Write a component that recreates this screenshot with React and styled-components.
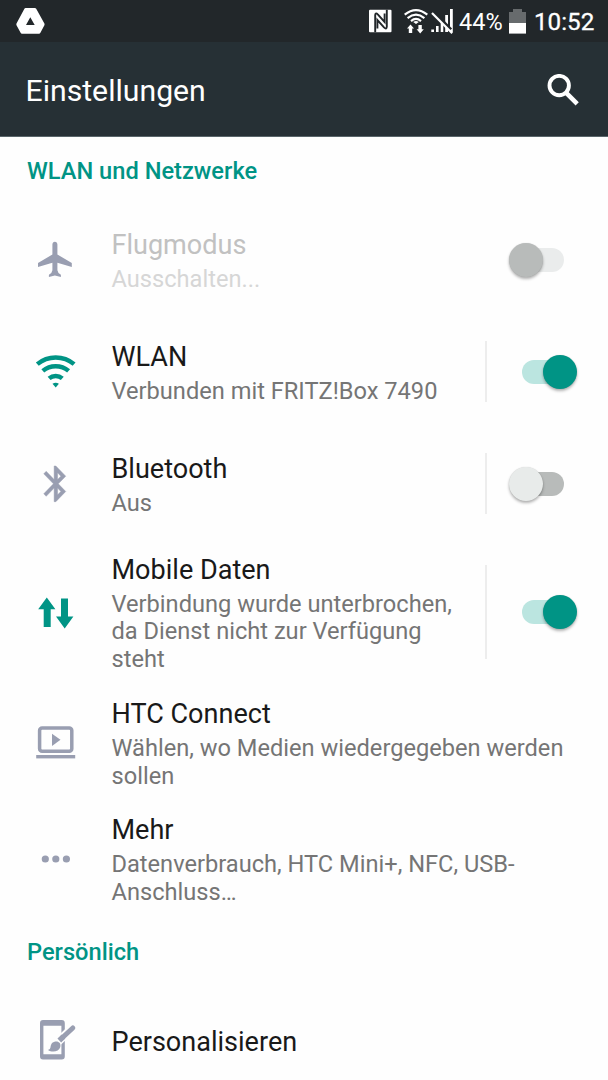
import React, { useState } from 'react';
import styled, { createGlobalStyle, ThemeProvider } from 'styled-components';

const theme = {
  accent: '#009485',
  accentLight: '#bbe5e0',
  icon: '#999eb1',
  title: '#191919',
  summary: '#757575',
};

const GlobalStyle = createGlobalStyle`
  * {
    box-sizing: border-box;
  }

  body {
    margin: 0;
    background: #fefefe;
    font-family: Roboto, 'Noto Sans', sans-serif;
    overflow: hidden;
  }
`;

const Screen = styled.div`
  width: 608px;
  height: 1080px;
  overflow: hidden;
  background: #fefefe;
`;

const StatusBar = styled.div`
  height: 42px;
  display: flex;
  align-items: center;
  padding: 0 14px 0 16px;
  background: #22272a;
  color: #fff;
`;

const StatusIcons = styled.div`
  display: flex;
  align-items: center;
  margin-left: auto;
`;

const StatusIcon = styled.svg`
  display: block;
  flex: none;
  margin-right: ${props => props.$gap || 0}px;
`;

const Battery = styled.span`
  width: 50px;
  font-size: 23.5px;
  line-height: 42px;
  padding-top: 2px;
`;

const Clock = styled.span`
  width: 60px;
  font-size: 24.2px;
  line-height: 42px;
  padding-top: 2px;
  white-space: nowrap;
  -webkit-text-stroke: 0.3px #fff;
`;

const AppBar = styled.header`
  height: 95px;
  display: flex;
  align-items: center;
  justify-content: space-between;
  margin-bottom: -1px;
  padding: 1px 28px 0 25.5px;
  background: #263035;
  border-bottom: 1px solid #59656a;
  color: #fff;
`;

const AppTitle = styled.h1`
  margin: 0;
  padding-top: 2px;
  font-size: 30.2px;
  font-weight: 400;
`;

const SearchButton = styled.button`
  padding: 0;
  border: 0;
  background: none;
  color: inherit;

  svg {
    display: block;
  }
`;

const SectionTitle = styled.h2`
  height: 68px;
  margin: 0;
  padding: 0 27px;
  font-size: 23.65px;
  font-weight: 500;
  line-height: 70px;
  color: ${props => props.theme.accent};
`;

const Row = styled.div`
  height: ${props => props.$height || 112}px;
  display: flex;
  align-items: center;
  padding: 0 24px 0 32px;
`;

const RowIcon = styled.svg`
  width: 48px;
  height: 48px;
  flex: none;
  margin-right: 31.5px;
  color: ${props => (props.$active ? props.theme.accent : props.theme.icon)};
`;

const RowText = styled.div`
  flex: 1;
  padding-top: ${props => (props.$single ? 2 : 0)}px;
  padding-right: ${props => (props.$toggle ? 16 : 0)}px;
  padding-bottom: ${props => (props.$single ? 0 : 2)}px;
`;

const RowTitle = styled.div`
  font-size: 27.05px;
  line-height: 41px;
  color: ${props => (props.$disabled ? '#c1c1c1' : props.theme.title)};
`;

const RowSummary = styled.div`
  font-size: 23.64px;
  line-height: 27.2px;
  color: ${props => (props.$disabled ? '#d6d6d6' : props.theme.summary)};
`;

const SwitchArea = styled.div`
  width: 99px;
  align-self: stretch;
  display: flex;
  align-items: center;
  margin: 25px 0 26px;
  padding-left: 35px;
  border-left: 2px solid ${props => (props.$divider ? '#ededed' : 'transparent')};
`;

const Track = styled.button`
  width: 42px;
  height: 24px;
  display: flex;
  align-items: center;
  justify-content: ${props => (props.$on ? 'flex-end' : 'flex-start')};
  padding: 0;
  border: 0;
  border-radius: 12px;
  background: ${props => {
    if (props.disabled) return '#eaecec';
    return props.$on ? props.theme.accentLight : '#b8bbba';
  }};
`;

const Knob = styled.span`
  width: 34px;
  height: 34px;
  flex: none;
  border-radius: 50%;
  margin: ${props => (props.$on ? '0 -13px 0 0' : '0 0 0 -13px')};
  background: ${props => {
    if (props.$disabled) return '#b8bbba';
    return props.$on ? props.theme.accent : '#e8ebea';
  }};
  box-shadow: 0 2px 3px rgba(0, 0, 0, 0.3), 0 0 1px rgba(0, 0, 0, 0.15);
`;

const AirplaneIcon = (
  <path
    fill="currentColor"
    d="M22.9 5.8c1.5 0 2.5 1.2 2.5 2.7V18.6L39.8 27V31L25.4 26.8V34.2Q25.5 36.6 28.9 38.8V41L22.9 39.6L16.9 41V38.8Q20.3 36.6 20.4 34.2V26.8L6 31V27L20.4 18.6V8.5c0-1.5 1-2.7 2.5-2.7z"
  />
);

const WifiIcon = (
  <g fill="none" stroke="currentColor" strokeWidth="4.5">
    <path d="M5.3 16.1A28.6 28.6 0 0 1 42.1 16.1" />
    <path d="M10.8 22.9A20 20 0 0 1 36.6 22.9" />
    <path d="M17.1 30.4A10.2 10.2 0 0 1 30.3 30.4" />
    <path d="M20.5 35.8Q23.7 33.6 26.9 35.8L23.7 39.4z" fill="currentColor" stroke="none" />
  </g>
);

const BluetoothIcon = (
  <path
    fill="currentColor"
    stroke="currentColor"
    strokeWidth=".25"
    transform="translate(3.1 2.4) scale(1.73 1.785)"
    d="M17.71 7.71L12 2h-1v7.59L6.41 5 5 6.41 10.59 12 5 17.59 6.41 19 11 14.41V22h1l5.71-5.71-4.3-4.29 4.3-4.29zM13 5.83l1.88 1.88L13 9.59V5.83zm1.88 10.46L13 18.17v-3.76l1.88 1.88z"
  />
);

const DataIcon = (
  <g fill="currentColor">
    <path d="M14.8 8.6L23.4 20.3H18.7V38.1H11.7V20.3H6.2z" />
    <path d="M29 9.6H36V27.6H41.4L32.7 39.6L24 27.6H29z" />
  </g>
);

const ConnectIcon = (
  <g fill="currentColor">
    <rect x="7.6" y="8.9" width="32.2" height="23.4" rx="2.5" fill="none" stroke="currentColor" strokeWidth="3.5" />
    <path d="M20 14.7L28.5 20.8L20 26.9z" />
    <rect x="4.2" y="36" width="39" height="3.4" />
  </g>
);

const MoreIcon = (
  <g fill="currentColor">
    <circle cx="13.3" cy="24" r="3.6" />
    <circle cx="23.8" cy="24" r="3.6" />
    <circle cx="34.4" cy="24" r="3.6" />
  </g>
);

const PersonalizeIcon = (
  <g fill="currentColor">
    <path
      fillRule="evenodd"
      d="M11 3H29.7Q32.8 3 32.8 6.2V39.2Q32.8 42.4 29.7 42.4H11Q8 42.4 8 39.2V6.2Q8 3 11 3zM11.4 8.7V37.3H29.4V8.7z"
    />
    <path d="M41.2 10.4L24 26.5" stroke="#fefefe" strokeWidth="8.5" />
    <path d="M40.8 11L30 21" stroke="currentColor" strokeWidth="5" strokeLinecap="round" />
    <path d="M31.5 19.6L27.3 23.5" stroke="currentColor" strokeWidth="5.4" />
    <path d="M22.5 24.8C26.6 23.8 29.2 26.4 28.3 29.9C27 34.6 20.2 35.8 16 32.9C18.9 32.2 18.2 30.4 19 28C19.6 26.2 20.8 25.2 22.5 24.8z" />
  </g>
);

const networkItems = [
  { id: 'airplane', title: 'Flugmodus', summary: 'Ausschalten...', icon: AirplaneIcon, toggle: true, disabled: true },
  { id: 'wifi', title: 'WLAN', summary: 'Verbunden mit FRITZ!Box 7490', icon: WifiIcon, toggle: true },
  { id: 'bluetooth', title: 'Bluetooth', summary: 'Aus', icon: BluetoothIcon, toggle: true },
  {
    id: 'data',
    title: 'Mobile Daten',
    summary: 'Verbindung wurde unterbrochen, da Dienst nicht zur Verfügung steht',
    icon: DataIcon,
    toggle: true,
    height: 145,
  },
  {
    id: 'connect',
    title: 'HTC Connect',
    summary: 'Wählen, wo Medien wiedergegeben werden sollen',
    icon: ConnectIcon,
    height: 116,
  },
  {
    id: 'more',
    title: 'Mehr',
    summary: 'Datenverbrauch, HTC Mini+, NFC, USB-Anschluss…',
    icon: MoreIcon,
    height: 116,
  },
];

const personalItems = [{ id: 'personalize', title: 'Personalisieren', icon: PersonalizeIcon }];

const SettingsRow = ({ item, on, onToggle }) => (
  <Row $height={item.height}>
    <RowIcon viewBox="0 0 48 48" $active={on}>
      {item.icon}
    </RowIcon>
    <RowText $single={!item.summary} $toggle={item.toggle}>
      <RowTitle $disabled={item.disabled}>{item.title}</RowTitle>
      {item.summary && <RowSummary $disabled={item.disabled}>{item.summary}</RowSummary>}
    </RowText>
    {item.toggle && (
      <SwitchArea $divider={!item.disabled}>
        <Track
          role="switch"
          aria-checked={on}
          aria-label={item.title}
          disabled={item.disabled}
          $on={on}
          onClick={() => onToggle(item.id)}
        >
          <Knob $on={on} $disabled={item.disabled} />
        </Track>
      </SwitchArea>
    )}
  </Row>
);

const App = () => {
  const [enabled, setEnabled] = useState({ wifi: true, data: true });

  const toggle = (id) => {
    setEnabled({ ...enabled, [id]: !enabled[id] });
  };

  return (
    <ThemeProvider theme={theme}>
      <GlobalStyle />
      <Screen>
        <StatusBar>
          <StatusIcon width="29" height="26" viewBox="0 0 29 26">
            <path
              fill="#fff"
              fillRule="evenodd"
              d="M9.6 0H18.8Q19.7 0 20.2.8L28.4 15.5Q28.8 16.4 28.4 17.2L24.4 24.8Q23.9 25.7 23 25.7H6Q5.1 25.7 4.6 24.8L.5 17.2Q.1 16.4.5 15.5L8.4.8Q8.8 0 9.6 0zM14.3 9.2L10 17H18.7z"
            />
          </StatusIcon>
          <StatusIcons>
            <StatusIcon width="23" height="24" viewBox="0 0 23 24" $gap={12}>
              <rect y=".8" width="22.5" height="22.5" rx="1" fill="#fff" />
              <g fill="none" stroke="#22272a" strokeWidth="1.9">
                <path d="M6.2 23.3V6Q6.4 3 9 5.6L15.6 13V4.6" />
                <path d="M17.8 .8V17.8Q17.6 21 15 18.4L8.4 11V19.4" />
              </g>
            </StatusIcon>
            <StatusIcon width="24" height="25" viewBox="0 0 24 25" $gap={3}>
              <g fill="none" stroke="#fff" strokeWidth="2.1">
                <path d="M.7 5.6Q12 -3.4 23.3 5.6" />
                <path d="M3.6 9.1Q12 2.2 20.4 9.1" />
                <path d="M7 12.1Q12 7.8 17 12.1" />
              </g>
              <path d="M9.2 13Q12 11.1 14.8 13L12 15z" fill="#fff" />
              <path d="M6.5 15.5L10 19.6H8.2V24H4.8V19.6H3z" fill="#fff" />
              <path d="M14.4 16H17.8V20.2H19.8L16.2 24.5L12.6 20.2H14.4z" fill="#fff" />
            </StatusIcon>
            <StatusIcon width="23" height="26" viewBox="0 0 23 26" $gap={5}>
              <path
                fill="#fff"
                d="M.3 21.5H3V24H.3zM5 18H7.6V24H5zM9.7 12H12.3V24H9.7zM14.2 7H17V24H14.2zM19 1H21.8V24H19z"
              />
              <path d="M3 4.2L20 21.5" stroke="#22272a" strokeWidth="3" />
              <path d="M1 5L21.2 25.2" stroke="#fff" strokeWidth="2.2" />
            </StatusIcon>
            <Battery>44%</Battery>
            <StatusIcon width="17" height="25" viewBox="0 0 17 25" $gap={8}>
              <path d="M4 0H13V3H17V14H0V3H4z" fill="#676b6d" />
              <path d="M0 14H17V24.6H0z" fill="#fff" />
            </StatusIcon>
            <Clock>10:52</Clock>
          </StatusIcons>
        </StatusBar>
        <AppBar>
          <AppTitle>Einstellungen</AppTitle>
          <SearchButton aria-label="Suchen">
            <svg width="33" height="32" viewBox="0 0 33 32">
              <circle cx="12.2" cy="11.6" r="9.7" fill="none" stroke="#fff" strokeWidth="3.9" />
              <path d="M19 18.6L30.2 29.8" stroke="#fff" strokeWidth="4.5" />
            </svg>
          </SearchButton>
        </AppBar>
        <SectionTitle>WLAN und Netzwerke</SectionTitle>
        {networkItems.map(item => (
          <SettingsRow key={item.id} item={item} on={!!enabled[item.id]} onToggle={toggle} />
        ))}
        <SectionTitle>Persönlich</SectionTitle>
        {personalItems.map(item => (
          <SettingsRow key={item.id} item={item} />
        ))}
      </Screen>
    </ThemeProvider>
  );
};

export default App;
